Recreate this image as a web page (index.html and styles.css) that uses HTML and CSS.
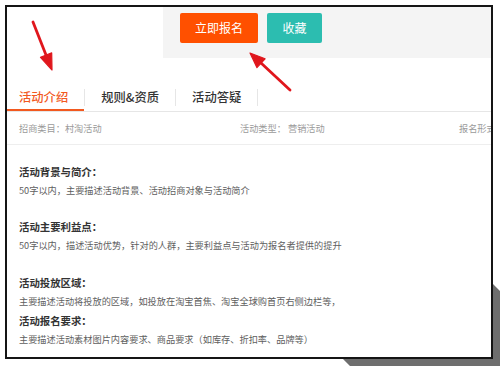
FILE: index.html
```html
<!DOCTYPE html>
<html lang="zh-CN">
<head>
<meta charset="utf-8">
<title>活动介绍</title>
<link rel="stylesheet" href="styles.css">
</head>
<body>
<div class="frame">
  <div class="topbar">
    <div class="actions">
      <button class="btn btn-primary">立即报名</button>
      <button class="btn btn-fav">收藏</button>
    </div>
  </div>
  <div class="tabs">
    <div class="tab tab-first active">活动介绍</div>
    <i class="sep"></i>
    <div class="tab">规则&amp;资质</div>
    <i class="sep"></i>
    <div class="tab">活动答疑</div>
    <i class="sep"></i>
  </div>
  <div class="info">
    <span class="info-item info-a">招商类目：村淘活动</span>
    <span class="info-item info-b">活动类型： 营销活动</span>
    <span class="info-item">报名形式：</span>
  </div>
  <div class="content">
    <div class="section">
      <h3>活动背景与简介：</h3>
      <p>50字以内，主要描述活动背景、活动招商对象与活动简介</p>
    </div>
    <div class="section">
      <h3>活动主要利益点：</h3>
      <p>50字以内，描述活动优势，针对的人群，主要利益点与活动为报名者提供的提升</p>
    </div>
    <div class="section tight">
      <h3>活动投放区域：</h3>
      <p>主要描述活动将投放的区域，如投放在淘宝首焦、淘宝全球购首页右侧边栏等，</p>
    </div>
    <div class="section">
      <h3>活动报名要求：</h3>
      <p>主要描述活动素材图片内容要求、商品要求（如库存、折扣率、品牌等）</p>
    </div>
  </div>
</div>
<svg class="overlay" width="500" height="366" viewBox="0 0 500 366" xmlns="http://www.w3.org/2000/svg">
  <defs>
    <filter id="glow" x="-20%" y="-20%" width="140%" height="140%">
      <feGaussianBlur stdDeviation="0.6"/>
    </filter>
  </defs>
  <polygon points="493,284 500,291 500,366 350,366 343,359 493,359" fill="#6e6e6e"/>
  <g filter="url(#glow)" fill="#e0161c" stroke="#e0161c">
    <line x1="33" y1="22" x2="46" y2="55" stroke-width="2.8" stroke-linecap="round"/>
    <polygon points="52,70 40.5,57.3 51.7,52.9" stroke-width="1.2" stroke-linejoin="round"/>
    <line x1="290" y1="90" x2="261" y2="63" stroke-width="2.8" stroke-linecap="round"/>
    <polygon points="250,53 265.1,58.8 256.9,67.6" stroke-width="1.2" stroke-linejoin="round"/>
  </g>
</svg>
</body>
</html>
```
FILE: styles.css
```css
* { box-sizing: border-box; }
html, body { margin: 0; padding: 0; background: #fff; }
body {
  width: 500px;
  height: 366px;
  overflow: hidden;
  position: relative;
  font-family: "Noto Sans CJK SC", "Noto Sans", sans-serif;
}
.frame {
  margin: 5px 0 0 5px;
  width: 488px;
  height: 354px;
  border: 2px solid #151515;
  overflow: hidden;
  background: #fff;
}
.topbar {
  height: 51px;
  display: flex;
}
.actions {
  margin-left: 156px;
  flex: 1;
  background: #f4f4f4;
  display: flex;
  gap: 9px;
  padding: 6px 0 0 17px;
  align-items: flex-start;
}
.btn {
  border: 0;
  height: 30px;
  border-radius: 2px;
  color: #fff;
  font-family: inherit;
  font-size: 12px;
  line-height: 30px;
  padding: 0;
}
.btn-primary { width: 78px; background: #ff5000; }
.btn-fav { width: 55px; background: #2cbdb0; }
.tabs {
  margin-top: 27px;
  display: flex;
  align-items: center;
  height: 27px;
  border-bottom: 1px solid #e6e6e6;
}
.tab {
  height: 26px;
  line-height: 24px;
  font-size: 12.3px;
  font-weight: 500;
  color: #333;
  padding: 0 16px;
  border-bottom: 2px solid transparent;
  white-space: nowrap;
}
.tab-first { padding-left: 12px; }
.tab.active {
  color: #f2591f;
  border-bottom-color: #f2591f;
}
.sep {
  width: 1px;
  height: 17px;
  background: #e6e6e6;
  margin-bottom: 2px;
}
.info {
  display: flex;
  height: 33px;
  line-height: 32px;
  padding-left: 12px;
  border-bottom: 1px solid #eeeeee;
  font-size: 9.2px;
  color: #9a9a9a;
  white-space: nowrap;
}
.info-item { flex: none; }
.info-a { width: 221px; }
.info-b { width: 219px; }
.content {
  padding: 17.5px 0 0 12px;
}
.section { margin-bottom: 18.5px; }
.section.tight { margin-bottom: 1.5px; }
.section h3 {
  margin: 0;
  font-size: 10.4px;
  line-height: 18px;
  font-weight: bold;
  color: #333;
}
.section p {
  margin: 0;
  font-size: 9.2px;
  line-height: 19px;
  color: #5e5e5e;
  white-space: nowrap;
}
.overlay {
  position: absolute;
  left: 0;
  top: 0;
  pointer-events: none;
}
```
